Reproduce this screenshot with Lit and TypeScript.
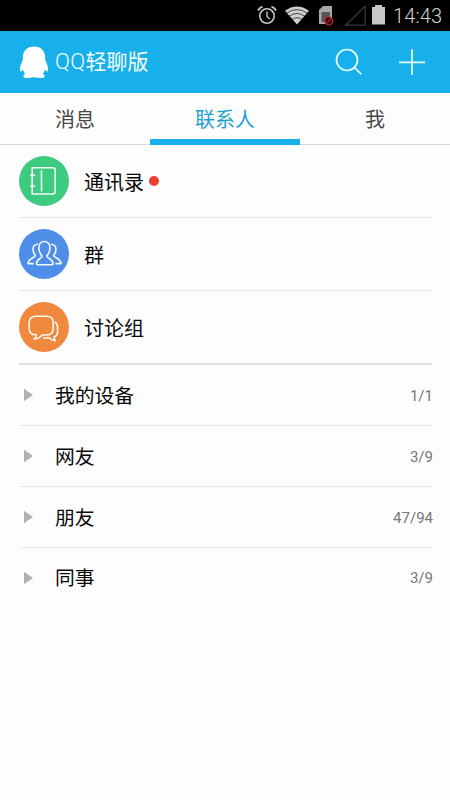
import { LitElement, html, css, svg } from "lit";
import { customElement } from "lit/decorators.js";

const entries = [
  {
    label: "通讯录",
    tone: "green",
    dot: true,
    icon: svg`<path d="M13.2 11.7H33.7Q36.2 11.7 36.2 14.2V35.5Q36.2 38 33.7 38H13.2Z"/><path d="M22.5 14.5V35.5M11 19.4H16.2M11 30.2H16.2"/>`,
  },
  {
    label: "群",
    tone: "blue",
    dot: false,
    icon: svg`<path d="M17.5 34.6C17.5 29.8 23 29.3 23 27C21 25 19.8 22.4 19.8 19C19.8 15.2 22 12.5 25.3 12.5C28.8 12.5 31 15.2 31 19C31 22.4 29.8 25 27.8 27C27.8 29.3 34 29.8 34 34.6Q34 35.7 33 35.7H18.5Q17.5 35.7 17.5 34.6Z"/><path d="M19 15.2C15.8 15 14 17.3 14 20.2C14 23 15 25 16.4 26.5C16.3 28.9 9 29 9 34.6H14.8M32 15.2C35 15 37 17.3 37 20.2C37 23 36 25 34.6 26.5C34.7 28.9 42 29 42 34.6H36.4"/>`,
  },
  {
    label: "讨论组",
    tone: "orange",
    dot: false,
    icon: svg`<path d="M17.5 14.2H27.5Q34.2 14.2 34.2 20.5V26.5Q34.2 33 27.5 33H23.2Q20 36.8 15.2 37Q17.5 35.2 17.2 32.8Q10.2 32.8 10.2 26.5V20.5Q10.2 14.2 17.5 14.2Z"/><path d="M35.7 20Q38.6 21.5 38.6 25.5V29.8Q38.6 33.5 35 35.2Q35 37.2 36.4 38.8Q32.5 38.2 30.3 36H24"/>`,
  },
];

const groups = [
  ["我的设备", "1/1"],
  ["网友", "3/9"],
  ["朋友", "47/94"],
  ["同事", "3/9"],
];

@customElement("app-root")
export class AppRoot extends LitElement {
  static styles = css`
    :host {
      display: flex;
      flex-direction: column;
      height: 800px;
      background: #fdfdfd;
      color: #080808;
      font-family: Roboto, "Noto Sans CJK SC", sans-serif;
    }
    svg { display: block; flex: none; }
    .status {
      height: 31px;
      background: #000;
      color: #d0d0d0;
      display: flex;
      justify-content: flex-end;
      padding-right: 7px;
      font-size: 20px;
      font-weight: 300;
      line-height: 32px;
    }
    .clock { width: 50px; white-space: nowrap; letter-spacing: 0.1px; }
    .header {
      height: 62px;
      background: #17b0ea;
      display: flex;
      align-items: center;
      color: #f4fdff;
    }
    .title {
      flex: 1;
      font-size: 21px;
      line-height: 62px;
      height: 62px;
      white-space: nowrap;
    }
    .latin { font-weight: 300; font-size: 22px; letter-spacing: 0.3px; }
    .tabs {
      height: 52px;
      display: grid;
      grid-template-columns: repeat(3, 1fr);
      text-align: center;
      font-size: 20px;
      line-height: 54px;
      color: #484848;
    }
    .tab { box-sizing: border-box; height: 52px; border-bottom: 1px solid #d8d8d8; }
    .active { color: #1c9fd3; border-bottom: 6px solid #17b0ea; }
    .entry {
      height: 72px;
      margin: 0 18px 0 19px;
      border-bottom: 1px solid #e5e5e5;
      display: flex;
      align-items: center;
      font-size: 20px;
    }
    .entry:last-child { border-bottom: 2px solid #e0e0e0; }
    .disc { width: 50px; height: 50px; border-radius: 50%; margin-right: 15px; }
    .disc svg { fill: none; stroke: #f3fbf6; stroke-width: 1.6; stroke-linejoin: round; }
    .green { background: #3dcb80; }
    .blue { background: #4e8de8; }
    .orange { background: #f0883e; }
    .dot { width: 10px; height: 10px; border-radius: 50%; background: #ee3e31; margin-left: 5px; }
    .group {
      height: 60px;
      margin: 0 18px 0 19px;
      border-bottom: 1px solid #e8e8e8;
      display: flex;
      align-items: center;
      font-size: 19.8px;
    }
    .group:last-child { border-bottom: none; height: 59px; }
    .arrow { margin: 0 22.5px 0 4.5px; }
    .name { flex: 1; padding-bottom: 2px; }
    .count { font-size: 15px; color: #777; margin-right: -1px; padding-top: 1px; }
  `;

  render() {
    return html`
      <div class="status">
        <svg width="137" height="31" viewBox="256 0 137 31" fill="none" stroke="#c6c6c6">
          <circle cx="267" cy="16" r="7.2" stroke-width="1.6" />
          <path d="M267 11.5V16.5L270 19" stroke-width="1.4" />
          <path d="M258 10.5Q259.5 7.6 262.5 6.6M276 10.5Q274.5 7.6 271.5 6.6" stroke-width="2" />
          <path d="M285 10.8Q297 2.3 309 10.8L297 24.5Z" fill="#d0d0d0" stroke="none" />
          <path d="M286.5 13.3Q297 5.8 307.5 13.3M289 16.3Q297 10.6 305 16.3M292 19.5Q297 15.8 302 19.5" stroke="#222" stroke-width=".8" />
          <path d="M323 6H332V24H319V10Z" fill="#a8a8a8" stroke="none" />
          <path d="M321.5 12H330V22H321.5Z" fill="#555" stroke="none" />
          <circle cx="328.8" cy="21" r="3.9" fill="#280607" stroke="#bd2631" stroke-width="1.4" />
          <path d="M326.2 18.4L331.5 23.6" stroke="#bd2631" stroke-width="1.3" transform="matrix(-1 0 0 1 657.7 0)" />
          <path d="M345.5 25.2H365.2V6.2Z" stroke="#3b3b3b" stroke-width="1.2" />
          <path d="M372 7H375V5H382V7H385V24.5H372Z" fill="#c6c6c6" stroke="none" />
        </svg>
        <div class="clock">14:43</div>
      </div>
      <div class="header">
        <svg width="55" height="62" viewBox="0 31 55 62" fill="#fff">
          <path d="M34 46.5C41 46.5 45.2 51 45.2 57.5V60C47 63.5 48.3 67 48 70.5C47.6 72.7 45.8 71 45 69.5Q44.5 72 42.8 73.8C45.5 75 45.2 78 42 78Q36.5 78 34 77.2Q31.5 78 26 78C22.8 78 22.6 75 25.2 73.8Q23.5 72 23 69.5C22.2 71 20.4 72.7 20 70.5C19.7 67 21 63.5 22.8 60V57.5C22.8 51 27 46.5 34 46.5Z" />
        </svg>
        <div class="title"><span class="latin">QQ</span>轻聊版</div>
        <svg width="120" height="62" viewBox="330 31 120 62" fill="none" stroke="#effcff" stroke-width="1.7">
          <circle cx="347" cy="60" r="10.5" />
          <path d="M354.5 67.5L361.5 74.5M399 62.3H425M412 49.3V75" />
        </svg>
      </div>
      <div class="tabs">
        <div class="tab">消息</div>
        <div class="tab active">联系人</div>
        <div class="tab">我</div>
      </div>
      <div>
        ${entries.map((e) => html`
          <div class="entry">
            <div class="disc ${e.tone}"><svg width="50" height="50" viewBox="0 0 50 50">${e.icon}</svg></div>
            <span>${e.label}</span>${e.dot ? html`<span class="dot"></span>` : ""}
          </div>`)}
      </div>
      <div>
        ${groups.map(([name, count]) => html`
          <div class="group">
            <svg class="arrow" width="9" height="14" viewBox="0 0 9 14"><path d="M0 .8L9 7L0 13.2Z" fill="#b0b0b0" /></svg>
            <span class="name">${name}</span><span class="count">${count}</span>
          </div>`)}
      </div>
    `;
  }
}
